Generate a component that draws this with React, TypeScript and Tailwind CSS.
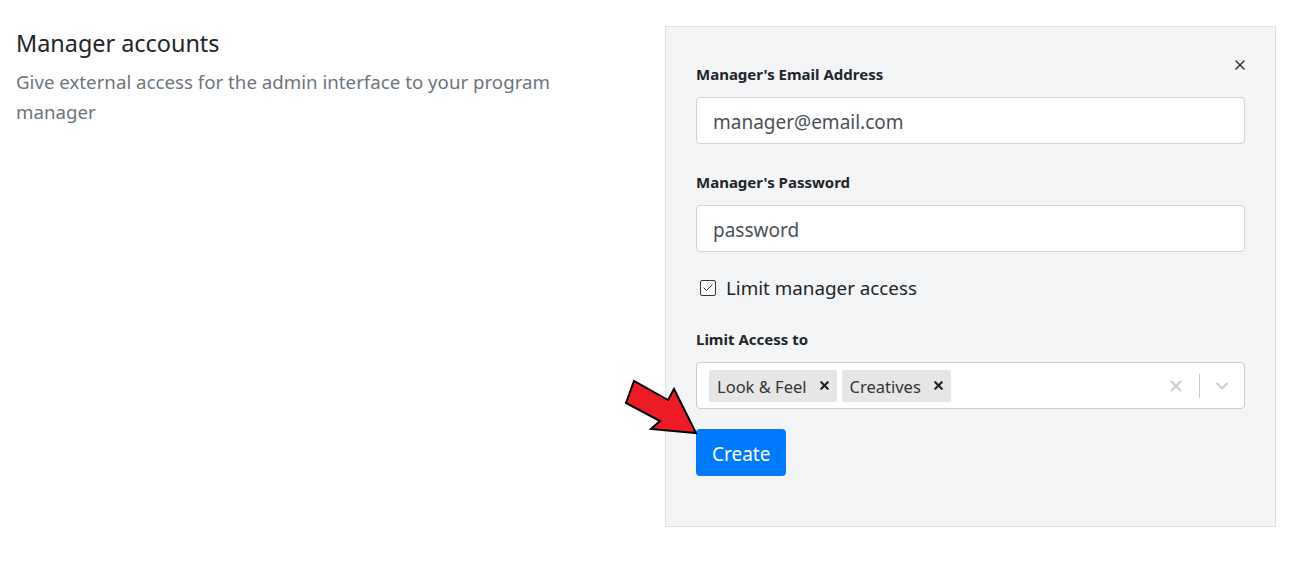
import { X, ChevronDown, Check } from "lucide-react";

function Label({ children }: { children: string }) {
  return <label className="block text-[15px] font-bold leading-[20px] text-[#212529]">{children}</label>;
}

function TextField({ value }: { value: string }) {
  return (
    <div className="mt-[13px] flex h-[47px] items-center rounded-[4px] border border-[#ced4da] bg-white px-[16px] pt-[3px] text-[19px] text-[#495057]">
      {value}
    </div>
  );
}

function Tag({ label }: { label: string }) {
  return (
    <span className="flex h-[32px] items-center rounded-[2px] bg-[#e6e6e6] pl-[8px] pr-[6px] pt-[3px] text-[16.5px] text-[#333]">
      {label}
      <X size={13} strokeWidth={4} className="-mt-[3px] ml-[11px] text-[#222]" />
    </span>
  );
}

export default function App() {
  return (
    <div className="relative flex min-h-[572px] bg-white px-[16px] pt-[26px] font-['Noto_Sans',sans-serif]">
      <div className="w-[630px] shrink-0 pr-[40px] pt-[2px]">
        <h2 className="text-[23.4px] font-normal leading-[30px] text-[#212529]">Manager accounts</h2>
        <p className="mt-[9px] text-[18.7px] leading-[30px] text-[#6c757d]">
          Give external access for the admin interface to your program manager
        </p>
      </div>

      <div className="relative ml-[19px] h-[501px] flex-1 border border-[#dee2e6] bg-[#f4f5f7] px-[30px] pt-[37px]">
        <button className="absolute right-[27px] top-[30px] text-[#333]">
          <X size={16} strokeWidth={2.2} />
        </button>

        <Label>Manager's Email Address</Label>
        <TextField value="manager@email.com" />

        <div className="mt-[28px]">
          <Label>Manager's Password</Label>
          <TextField value="password" />
        </div>

        <div className="mt-[23px] flex items-center">
          <span className="ml-[4px] flex h-[16px] w-[16px] items-center justify-center rounded-[2px] border border-[#333] bg-white">
            <Check size={12} strokeWidth={2} className="text-[#333]" />
          </span>
          <span className="ml-[10px] text-[18.8px] leading-[26px] text-[#212529]">Limit manager access</span>
        </div>

        <div className="mt-[28px]">
          <Label>Limit Access to</Label>
          <div className="mt-[13px] flex h-[47px] items-center rounded-[4px] border border-[#cccccc] bg-white pl-[12px]">
            <div className="flex flex-1 gap-[5px]">
              <Tag label="Look & Feel" />
              <Tag label="Creatives" />
            </div>
            <X size={18} strokeWidth={2.5} className="mr-[14px] text-[#cccccc]" />
            <span className="h-[24px] w-px bg-[#cccccc]" />
            <ChevronDown size={20} strokeWidth={2.5} className="mx-[12px] text-[#cccccc]" />
          </div>
        </div>

        <button className="mt-[20px] h-[47px] rounded-[4px] bg-[#007bff] px-[16px] pt-[3px] text-[19px] text-white">Create</button>
      </div>

      <svg className="absolute left-[620px] top-[375px]" width="80" height="62" viewBox="0 0 80 62">
        <polygon
          points="76,58 54,14 48,25 14,6 6,28 40,46 31,54"
          fill="#ed1c24"
          stroke="#000"
          strokeWidth="2"
          strokeLinejoin="miter"
        />
      </svg>
    </div>
  );
}
